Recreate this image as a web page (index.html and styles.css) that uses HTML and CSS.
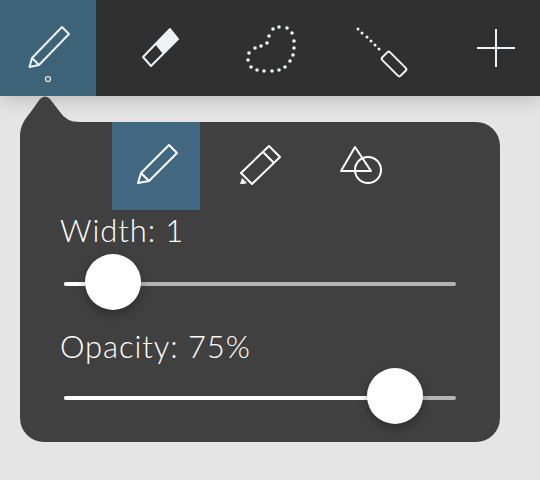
FILE: index.html
```html
<!DOCTYPE html>
<html lang="en">
<head>
    <meta charset="UTF-8">
    <title>Brush options</title>
    <link rel="stylesheet" href="styles.css">
</head>
<body>
    <div class="toolbar">
        <div class="tool active">
            <svg class="icon soft" viewBox="0 0 96 96">
                <path d="M62 27 L69 34 L39 65 L29.5 67 L32 58 Z M32 58 L39 65"/>
                <circle class="ring" cx="48" cy="79" r="2.5"/>
            </svg>
        </div>
        <div class="tool">
            <svg class="icon soft" viewBox="0 0 96 96">
                <path d="M58 29 L66 39 L39 66 L31 57 Z"/>
                <path class="solid" d="M58 29 L66 39 L51 54 L43 44 Z"/>
            </svg>
        </div>
        <div class="tool">
            <svg class="dots" viewBox="0 0 96 96">
                <circle cx="55" cy="27" r="1.8"/><circle cx="49" cy="29" r="1.8"/><circle cx="63" cy="28" r="1.8"/>
                <circle cx="68" cy="33" r="1.8"/><circle cx="70" cy="41" r="1.8"/><circle cx="70" cy="48" r="1.8"/>
                <circle cx="69" cy="55" r="1.8"/><circle cx="66" cy="61" r="1.8"/><circle cx="61" cy="67" r="1.8"/>
                <circle cx="55" cy="70" r="1.8"/><circle cx="48" cy="71" r="1.8"/><circle cx="40" cy="71" r="1.8"/>
                <circle cx="33" cy="70" r="1.8"/><circle cx="27" cy="67" r="1.8"/><circle cx="24" cy="60" r="1.8"/>
                <circle cx="25" cy="53" r="1.8"/><circle cx="31" cy="48" r="1.8"/><circle cx="37" cy="46" r="1.8"/>
                <circle cx="43" cy="43" r="1.8"/><circle cx="45" cy="36" r="1.8"/>
            </svg>
        </div>
        <div class="tool">
            <svg class="icon soft" viewBox="0 0 96 96">
                <rect x="45" y="58.5" width="26" height="11" rx="2" transform="rotate(45 58 64)"/>
                <g class="dots">
                    <circle cx="22" cy="29" r="1.5"/><circle cx="26" cy="33" r="1.5"/><circle cx="31" cy="37" r="1.5"/>
                    <circle cx="35" cy="41" r="1.5"/><circle cx="39" cy="45" r="1.5"/><circle cx="43" cy="49" r="1.5"/>
                </g>
            </svg>
        </div>
        <div class="tool">
            <svg class="icon soft" viewBox="0 0 96 96">
                <path d="M29 48 H67 M48 29 V67"/>
            </svg>
        </div>
    </div>

    <div class="panel">
        <svg class="tail" viewBox="0 0 80 50">
            <path d="M0 40 C0 30 5 23 10 17 L20 3 Q25 -2 30 3 L40 16 Q46 26 60 26 L80 26 L80 50 L0 50 Z"/>
        </svg>
        <div class="tabs">
            <div class="tab active">
                <svg class="icon" viewBox="0 0 88 88">
                    <path d="M57 23 L65 31 L37 59 L26 61 L29 51 Z M29 51 L37 59"/>
                </svg>
            </div>
            <div class="tab">
                <svg class="icon" viewBox="0 0 88 88">
                    <path d="M53 24 L64 35 L36 62 L25 51 Z M47 30 L58 41"/>
                    <path class="solid" d="M26 56 L31 61 L28 62 L24 62 Z"/>
                </svg>
            </div>
            <div class="tab">
                <svg class="icon" viewBox="0 0 88 88">
                    <path d="M35 25 L21 49 H51 Z"/>
                    <circle cx="48" cy="48" r="13"/>
                </svg>
            </div>
        </div>

        <div class="label">Width: 1</div>
        <div class="slider">
            <div class="track"><div class="fill" style="width: 12.5%"></div></div>
            <div class="thumb" style="left: 12.5%"></div>
        </div>

        <div class="label second">Opacity: 75%</div>
        <div class="slider">
            <div class="track"><div class="fill" style="width: 84.4%"></div></div>
            <div class="thumb" style="left: 84.4%"></div>
        </div>
    </div>
</body>
</html>
```

FILE: styles.css
```css
html, body {
    height: 100%;
}
body {
    margin: 0;
    background-color: #e5e5e5;
    font-family: 'Lato', 'Liberation Sans', sans-serif;
    overflow: hidden;
}

.toolbar {
    display: flex;
    gap: 16px;
    height: 96px;
    background-color: #303030;
    box-shadow: 0 4px 18px rgba(0, 0, 0, 0.18);
}
.tool {
    flex: 0 0 96px;
    height: 96px;
}
.tool.active {
    background-color: #3d6379;
}

.icon {
    display: block;
    fill: none;
    stroke: #fff;
    stroke-width: 2;
    stroke-linejoin: round;
}
.icon.soft {
    stroke: #eef2f4;
}
.icon .ring {
    stroke-width: 1.2;
}
.icon .solid {
    fill: #eef2f4;
    stroke: none;
}
.dots {
    display: block;
    fill: #eef2f4;
    stroke: none;
}

.panel {
    position: relative;
    width: 480px;
    height: 320px;
    margin: 26px 0 0 20px;
    background-color: #404040;
    border-radius: 24px;
}
.tail {
    position: absolute;
    left: 0;
    top: -26px;
    width: 80px;
    height: 50px;
    fill: #404040;
    overflow: visible;
}
.tabs {
    position: relative;
    display: flex;
    gap: 16px;
    margin-left: 92px;
}
.tab {
    flex: 0 0 88px;
    height: 88px;
}
.tab.active {
    background-color: #416880;
}

.label {
    height: 44px;
    padding-left: 40px;
    font-size: 31px;
    font-weight: 300;
    line-height: 41px;
    letter-spacing: 0.9px;
    color: #fff;
}
.label.second {
    margin-top: 14px;
    line-height: 44px;
}

.slider {
    position: relative;
    height: 56px;
    margin: 0 44px;
}
.track {
    position: absolute;
    left: 0;
    right: 0;
    top: 28px;
    height: 4px;
    border-radius: 2px;
    background-color: #b4b4b4;
}
.fill {
    height: 100%;
    border-radius: 2px;
    background-color: #fff;
}
.thumb {
    position: absolute;
    top: 0;
    width: 56px;
    height: 56px;
    margin-left: -28px;
    border-radius: 50%;
    background-color: #fff;
    box-shadow: 0 4px 10px rgba(0, 0, 0, 0.3);
}
```
